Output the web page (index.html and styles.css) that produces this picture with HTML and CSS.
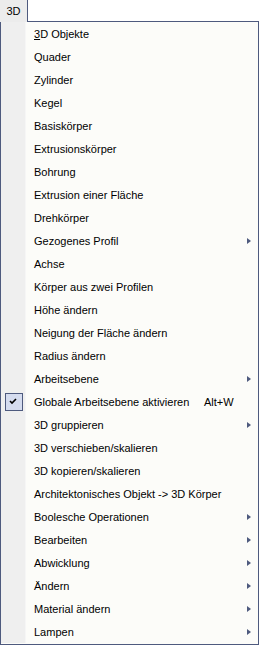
FILE: index.html
```html
<!DOCTYPE html>
<html>
<head>
<meta charset="utf-8">
<link rel="stylesheet" href="styles.css">
</head>
<body>
<div class="bar"><div class="tab">3D</div><div class="fill"></div></div>
<div class="menu">
  <div class="item"><span class="gut"></span><span class="label"><u>3</u>D Objekte</span></div>
  <div class="item"><span class="gut"></span><span class="label">Quader</span></div>
  <div class="item"><span class="gut"></span><span class="label">Zylinder</span></div>
  <div class="item"><span class="gut"></span><span class="label">Kegel</span></div>
  <div class="item"><span class="gut"></span><span class="label">Basiskörper</span></div>
  <div class="item"><span class="gut"></span><span class="label">Extrusionskörper</span></div>
  <div class="item"><span class="gut"></span><span class="label">Bohrung</span></div>
  <div class="item"><span class="gut"></span><span class="label">Extrusion einer Fläche</span></div>
  <div class="item"><span class="gut"></span><span class="label">Drehkörper</span></div>
  <div class="item sub"><span class="gut"></span><span class="label">Gezogenes Profil</span><span class="arrow"></span></div>
  <div class="item"><span class="gut"></span><span class="label">Achse</span></div>
  <div class="item"><span class="gut"></span><span class="label">Körper aus zwei Profilen</span></div>
  <div class="item"><span class="gut"></span><span class="label">Höhe ändern</span></div>
  <div class="item"><span class="gut"></span><span class="label">Neigung der Fläche ändern</span></div>
  <div class="item"><span class="gut"></span><span class="label">Radius ändern</span></div>
  <div class="item sub"><span class="gut"></span><span class="label">Arbeitsebene</span><span class="arrow"></span></div>
  <div class="item"><span class="gut"><span class="check"><svg width="9" height="7" viewBox="0 0 9 7"><path d="M1 3 L3 5 L7 1" fill="none" stroke="#000" stroke-width="1.6"/></svg></span></span><span class="label">Globale Arbeitsebene aktivieren</span><span class="key">Alt+W</span></div>
  <div class="item sub"><span class="gut"></span><span class="label">3D gruppieren</span><span class="arrow"></span></div>
  <div class="item"><span class="gut"></span><span class="label">3D verschieben/skalieren</span></div>
  <div class="item"><span class="gut"></span><span class="label">3D kopieren/skalieren</span></div>
  <div class="item"><span class="gut"></span><span class="label">Architektonisches Objekt -&gt; 3D Körper</span></div>
  <div class="item sub"><span class="gut"></span><span class="label">Boolesche Operationen</span><span class="arrow"></span></div>
  <div class="item sub"><span class="gut"></span><span class="label">Bearbeiten</span><span class="arrow"></span></div>
  <div class="item sub"><span class="gut"></span><span class="label">Abwicklung</span><span class="arrow"></span></div>
  <div class="item sub"><span class="gut"></span><span class="label">Ändern</span><span class="arrow"></span></div>
  <div class="item sub"><span class="gut"></span><span class="label">Material ändern</span><span class="arrow"></span></div>
  <div class="item sub"><span class="gut"></span><span class="label">Lampen</span><span class="arrow"></span></div>
</div>
</body>
</html>
```
FILE: styles.css
```css
html, body { margin: 0; padding: 0; background: #ffffff; }
body { width: 259px; font-family: "Liberation Sans", Arial, sans-serif; font-size: 11px; color: #000; }
.bar { height: 22px; display: flex; }
.tab { width: 28px; height: 22px; padding-bottom: 1px; box-sizing: border-box; background: #ececec; border-right: 1px solid #4e5a7e; display: flex; align-items: center; justify-content: center; font-size: 11px; }
.fill { flex: 1; height: 22px; box-sizing: border-box; border-bottom: 1px solid #4e5a7e; }
.menu { border: 1px solid #4e5a7e; border-top: 0; background: #fcfcf9; height: 623px; box-sizing: border-box; }
.item { height: 23px; display: flex; align-items: center; }
.gut { width: 24px; height: 23px; background: #efefef; border-right: 1px solid #f6f6f6; flex: none; display: flex; align-items: center; justify-content: center; }
.label { padding-left: 8px; flex: 1; white-space: nowrap; }
.key { width: 54px; flex: none; }
.arrow { width: 0; height: 0; border-top: 3.5px solid transparent; border-bottom: 3.5px solid transparent; border-left: 4px solid #4e5a7e; margin-right: 7px; }
.check { width: 18px; height: 18px; box-sizing: border-box; border: 1px solid #4e5a7e; background: #d5dcef; display: flex; align-items: center; justify-content: center; margin-left: 1px; }
```
